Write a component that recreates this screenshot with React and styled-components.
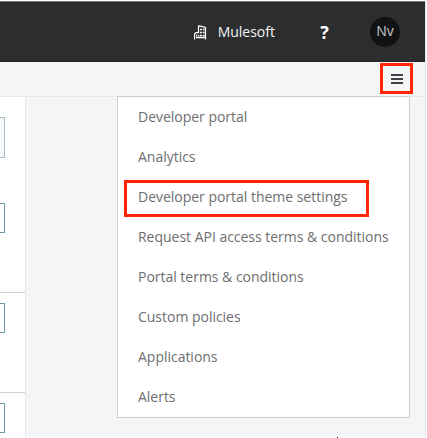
import React from "react";
import styled, { createGlobalStyle } from "styled-components";

const GlobalStyle = createGlobalStyle`
  *, *::before, *::after { box-sizing: border-box; }
  html, body { margin: 0; background: #fff; overflow: hidden; }
  body { font-family: "Open Sans", sans-serif; font-size: 14px; }
`;

const Window = styled.div`
  width: 427px;
  height: 438px;
  padding: 1px 1px 0 0;
  background: #fff;
`;

const Frame = styled.div`
  display: flex;
  flex-direction: column;
  height: 436px;
  border-right: 1px solid #e8e8ea;
  background: #f4f5f7;
`;

const Header = styled.header`
  display: flex;
  align-items: center;
  justify-content: flex-end;
  flex: none;
  height: 61px;
  width: 425px;
  padding-right: 25px;
  border-top: 1px solid #777b7c;
  box-shadow: inset 0 -1px 0 #242527;
  background: #2c2d2f;
  color: #f4f4f5;
`;

const Organization = styled.div`
  display: flex;
  align-items: center;
  gap: 11px;
  margin-right: 44px;
  line-height: 20px;
`;

const Help = styled.div`
  width: 11px;
  margin-right: 40px;
  color: #fff;
  font-size: 18px;
  font-weight: 700;
  line-height: 20px;
  text-align: center;
`;

const Avatar = styled.div`
  display: grid;
  place-items: center;
  width: 30px;
  height: 30px;
  padding-bottom: 2px;
  border-radius: 50%;
  background: #111214;
  color: #c9cacb;
  line-height: 18px;
`;

const Toolbar = styled.div`
  display: flex;
  flex: none;
  justify-content: flex-end;
  height: 35px;
  padding: 1px 12px 0 0;
  border-bottom: 1px solid #e8e9eb;
`;

const MenuButton = styled.button`
  display: grid;
  place-items: center;
  width: 33px;
  height: 31px;
  padding: 0;
  border: 3px solid #ff2600;
  background: transparent;
`;

const Content = styled.main`
  display: flex;
  flex: 1;
  min-height: 0;
`;

const SidePanel = styled.aside`
  flex: none;
  width: 26px;
  border-right: 1px solid #e6e7e8;
  background: #fff;
`;

const PanelRow = styled.div`
  height: ${(p) => p.$height}px;
  padding-top: ${(p) => p.$top}px;
  border-bottom: ${(p) => (p.$last ? "none" : "1px solid #cfcfd0")};
`;

const CutField = styled.div`
  width: 5px;
  height: ${(p) => (p.$muted ? 41 : 30)}px;
  margin-bottom: ${(p) => (p.$muted ? 45 : 0)}px;
  border: 1px solid ${(p) => (p.$muted ? "#a5bac3" : "#7195a4")};
  border-left: 0;
  background: ${(p) => (p.$muted ? "#f6f8f9" : "#fff")};
`;

const Menu = styled.nav`
  width: 293px;
  height: 322px;
  margin: -1px 0 0 91px;
  border: 1px solid #cbcccd;
  background: #fff;
  position: relative;
`;

const MenuItem = styled.div`
  height: 40px;
  padding: 10px 0 10px 20px;
  color: #6d6e70;
  letter-spacing: -0.02px;
  line-height: 20px;
  white-space: nowrap;
`;

const Highlight = styled.div`
  position: absolute;
  left: 6px;
  top: 83px;
  width: 245px;
  height: 37px;
  border: 3px solid #ff2600;
`;

const TextCursor = styled.div`
  width: 1px;
  height: 1px;
  margin-left: 337px;
  background: #111;
`;

const items = [
  "Developer portal",
  "Analytics",
  "Developer portal theme settings",
  "Request API access terms & conditions",
  "Portal terms & conditions",
  "Custom policies",
  "Applications",
  "Alerts",
];

function BuildingIcon() {
  return (
    <svg width="13" height="15" viewBox="0 0 13 15" fill="none" stroke="#fff">
      <path d="M4.5 8V1.2L5.5.9 11.5 2.4V14.5M4.5 7.5H2L.5 9V14.5" strokeWidth="1.25" />
      <path d="M6 4.5h1.9m.9 0h1.9M6 7.5h1.9m.9 0h1.9M6 10.5h1.9m.9 0h1.9M2 10.5h1.2m.9 0h1.1M2 12.5h9" strokeWidth="1.35" />
    </svg>
  );
}

function BarsIcon() {
  return (
    <svg width="12" height="10" viewBox="0 0 12 10" fill="#414246">
      <path d="M0 0h12v2H0zM0 4h12v2H0zM0 8h12v2H0z" />
    </svg>
  );
}

export default function App() {
  return (
    <Window>
      <GlobalStyle />
      <Frame>
        <Header>
          <Organization>
            <BuildingIcon />
            <span>Mulesoft</span>
          </Organization>
          <Help>?</Help>
          <Avatar>Nv</Avatar>
        </Header>
        <Toolbar>
          <MenuButton aria-label="Menu">
            <BarsIcon />
          </MenuButton>
        </Toolbar>
        <Content>
          <SidePanel>
            <PanelRow $height={196} $top={20}>
              <CutField $muted />
              <CutField />
            </PanelRow>
            <PanelRow $height={100} $top={10}>
              <CutField />
            </PanelRow>
            <PanelRow $height={44} $top={10} $last>
              <CutField />
            </PanelRow>
          </SidePanel>
          <Menu>
            {items.map((label) => (
              <MenuItem key={label}>{label}</MenuItem>
            ))}
            <Highlight />
          </Menu>
        </Content>
      </Frame>
      <TextCursor />
    </Window>
  );
}
